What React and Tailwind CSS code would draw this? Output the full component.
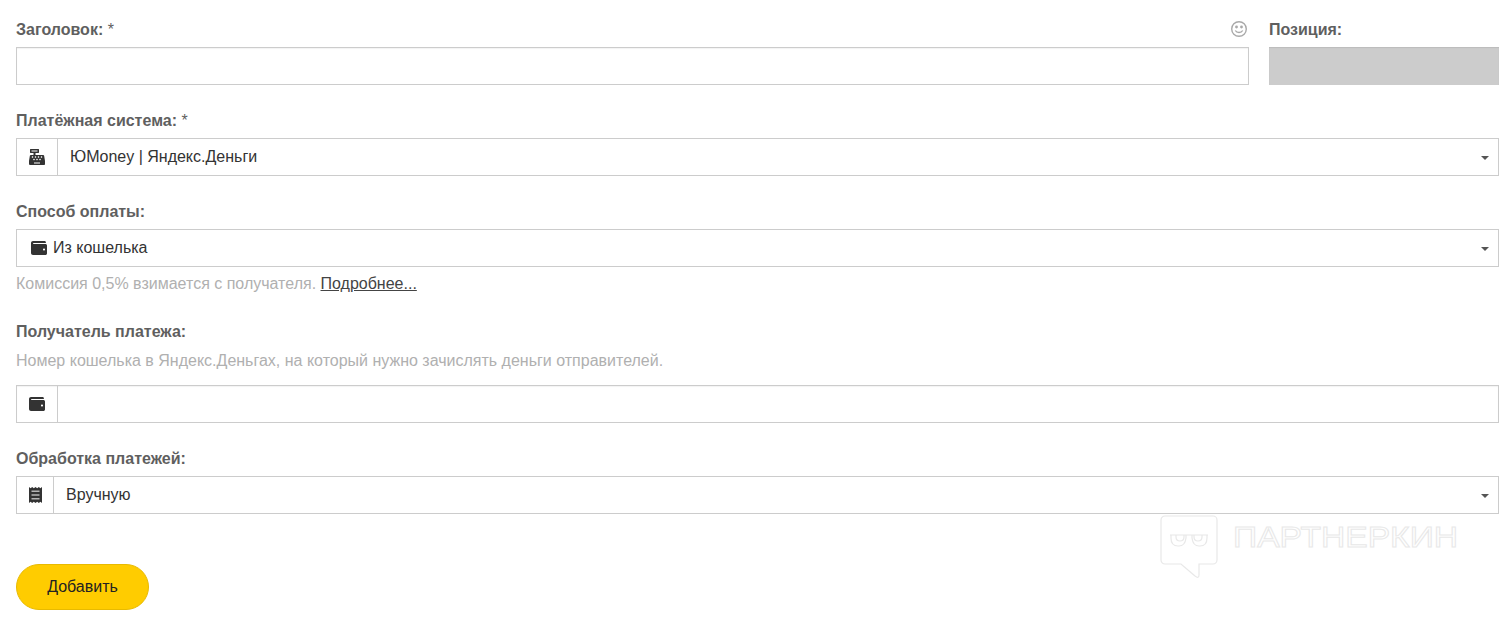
import React from 'react'
import { FaCashRegister, FaWallet } from 'react-icons/fa'

function Label({ children, required }) {
  return (
    <div className="h-[18px] leading-[20px] text-[16px] font-bold text-[#5f5f5f]">
      {children}
      {required && <span className="font-normal"> *</span>}
    </div>
  )
}

function Caret() {
  return <span className="absolute right-[9px] top-[17px] w-0 h-0 border-x-[4px] border-x-transparent border-t-[4px] border-t-[#555]" />
}

function IconCell({ width, children }) {
  return (
    <div className={`${width} shrink-0 flex items-center justify-center border-r border-[#cccccc] text-[#333]`}>
      {children}
    </div>
  )
}

function ReceiptIcon() {
  return (
    <svg width="13" height="16" viewBox="0 0 13 16">
      <path fill="#333" d="M0 0l1.6 1.2L3.2 0l1.6 1.2L6.5 0l1.7 1.2L9.8 0l1.6 1.2L13 0v16l-1.6-1.2L9.8 16l-1.6-1.2L6.5 16l-1.7-1.2L3.2 16l-1.6-1.2L0 16z" />
      <path fill="#b5b5b5" d="M2.5 3.5h8v1.6h-8zM2.5 7.2h8v1.6h-8zM2.5 10.9h8v1.6h-8z" />
    </svg>
  )
}

export default function App() {
  return (
    <div className="relative h-[630px] bg-white pt-[20px] pl-4 pr-[10px] font-['Liberation_Sans',Arial,sans-serif] text-[16px] overflow-hidden">
      {/* Заголовок + позиция */}
      <div className="flex gap-5">
        <div className="flex-1">
          <div className="flex justify-between">
            <Label required>Заголовок:</Label>
            <svg width="18" height="18" viewBox="0 0 18 18" fill="none" stroke="#a9a9a9" strokeWidth="1.4" className="mr-px">
              <circle cx="9" cy="9" r="7.3" />
              <circle cx="6.5" cy="7" r=".7" fill="#a9a9a9" />
              <circle cx="11.5" cy="7" r=".7" fill="#a9a9a9" />
              <path d="M5.3 10.5c1.6 2.6 5.8 2.6 7.4 0" />
            </svg>
          </div>
          <div className="mt-[9px] h-[38px] border border-[#cccccc] shadow-[inset_0_1px_1px_rgba(0,0,0,0.05)]" />
        </div>
        <div className="w-[230px]">
          <Label>Позиция:</Label>
          <div className="mt-[9px] h-[38px] bg-[#cccccc] shadow-[inset_0_1px_1px_rgba(0,0,0,0.08)]" />
        </div>
      </div>

      {/* Платёжная система */}
      <div className="mt-[26px]">
        <Label required>Платёжная система:</Label>
        <div className="relative mt-[9px] h-[38px] flex border border-[#cccccc]">
          <IconCell width="w-[41px]"><FaCashRegister size={16} /></IconCell>
          <div className="flex items-center pl-3 text-[#333]">ЮMoney | Яндекс.Деньги</div>
          <Caret />
        </div>
      </div>

      {/* Способ оплаты */}
      <div className="mt-[26px]">
        <Label>Способ оплаты:</Label>
        <div className="relative mt-[9px] h-[38px] flex items-center border border-[#cccccc] pl-[14px] text-[#333]">
          <FaWallet size={16} className="mr-[6px]" />
          Из кошелька
          <Caret />
        </div>
        <div className="mt-[7px] h-[18px] leading-[20px] text-[#b0b0b0]">
          Комиссия 0,5% взимается с получателя. <span className="text-[#444] underline">Подробнее...</span>
        </div>
      </div>

      {/* Получатель платежа */}
      <div className="mt-[30px]">
        <Label>Получатель платежа:</Label>
        <div className="mt-[11px] h-[18px] leading-[20px] text-[#b0b0b0]">
          Номер кошелька в Яндекс.Деньгах, на который нужно зачислять деньги отправителей.
        </div>
        <div className="mt-[16px] h-[38px] flex border border-[#cccccc] shadow-[inset_0_1px_1px_rgba(0,0,0,0.05)]">
          <IconCell width="w-[41px]"><FaWallet size={16} /></IconCell>
        </div>
      </div>

      {/* Обработка платежей */}
      <div className="mt-[26px]">
        <Label>Обработка платежей:</Label>
        <div className="relative mt-[9px] h-[38px] flex border border-[#cccccc]">
          <IconCell width="w-[37px]"><ReceiptIcon /></IconCell>
          <div className="flex items-center pl-3 text-[#333]">Вручную</div>
          <Caret />
        </div>
      </div>

      <button className="mt-[50px] w-[133px] h-[46px] rounded-full bg-[#ffcc00] border border-[#e8ba00] text-[#222] text-[16px]">
        Добавить
      </button>

      {/* Водяной знак */}
      <div className="absolute left-[1160px] top-[515px] flex gap-[15px] pointer-events-none">
        <svg width="58" height="64" viewBox="0 0 58 64" fill="none" stroke="#e8e8e8" strokeWidth="1.2">
          <path d="M5 1h48a4 4 0 0 1 4 4v40a4 4 0 0 1-4 4H39v11q0 4-4 1L21 49H5a4 4 0 0 1-4-4V5a4 4 0 0 1 4-4z" />
          <path d="M10 20h38M11 20v3q0 8 7 8h1q6 0 7-8v-3M47 20v3q0 8-7 8h-1q-6 0-7-8v-3" />
          <path d="M16 20v2q0 4 4 4t4-4v-2M34 20v2q0 4 4 4t4-4v-2" />
        </svg>
        <span className="mt-[7px] origin-left scale-x-[1.12] text-[30px] leading-[30px] h-[30px] text-white [-webkit-text-stroke:1px_#e8e8e8]">ПАРТНЕРКИН</span>
      </div>
    </div>
  )
}
